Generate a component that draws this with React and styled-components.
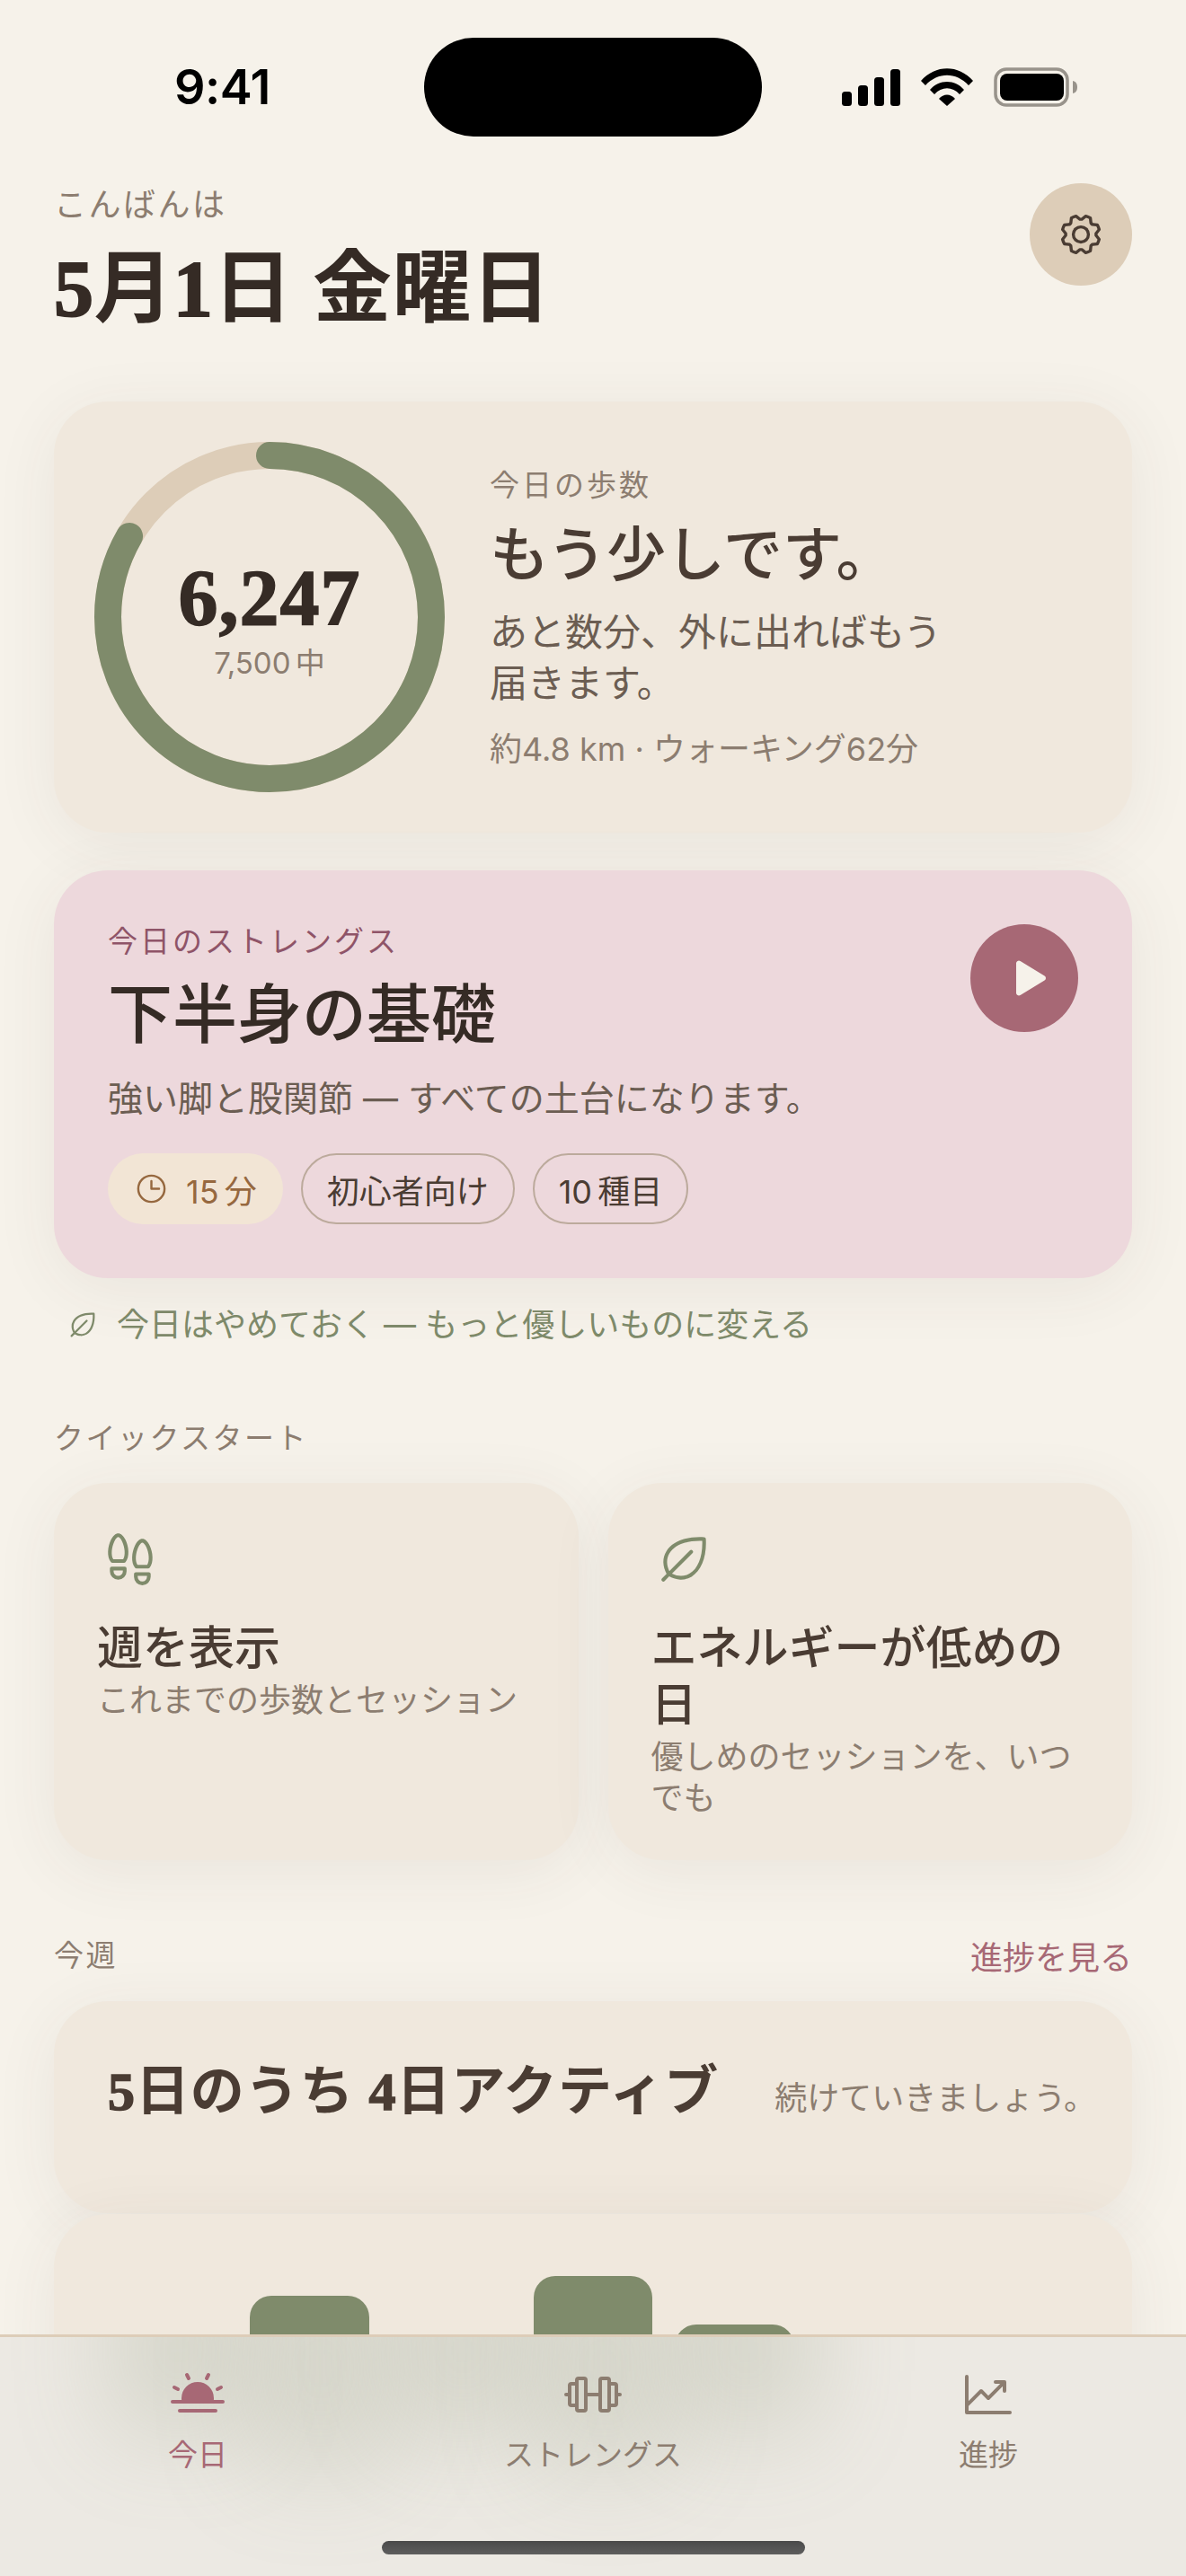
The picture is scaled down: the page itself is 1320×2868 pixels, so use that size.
import React from 'react';
import styled, { createGlobalStyle } from 'styled-components';
import {
  PiGear,
  PiPlayFill,
  PiClock,
  PiLeaf,
  PiFootprints,
  PiSunHorizonFill,
  PiBarbell,
  PiChartLineUp,
} from 'react-icons/pi';

const GlobalStyle = createGlobalStyle`
  html, body {
    margin: 0;
    padding: 0;
    background: #f6f2ea;
  }
  * {
    box-sizing: border-box;
  }
`;

const SANS = `Inter, "Noto Sans CJK JP", sans-serif`;
const DISPLAY = `"Liberation Serif", "Noto Sans CJK JP", serif`;

const Page = styled.div`
  position: relative;
  width: 1320px;
  height: 2868px;
  overflow: hidden;
  background: #f6f2ea;
  font-family: ${SANS};
  color: #352b25;
`;

const StatusBar = styled.div`
  position: relative;
  height: 204px;
`;

const Clock = styled.div`
  position: absolute;
  left: 194px;
  top: 66px;
  font-size: 54px;
  line-height: 62px;
  font-weight: 600;
  letter-spacing: -0.5px;
  color: #000;
`;

const Island = styled.div`
  position: absolute;
  left: 472px;
  top: 42px;
  width: 376px;
  height: 110px;
  border-radius: 55px;
  background: #000;
`;

const StatusIcons = styled.div`
  position: absolute;
  left: 937px;
  top: 75px;
  display: flex;
  align-items: center;
  gap: 23px;
`;

const Header = styled.header`
  display: flex;
  justify-content: space-between;
  align-items: flex-start;
  padding: 0 60px 75px;
`;

const Greeting = styled.div`
  font-size: 36px;
  line-height: 44px;
  letter-spacing: 2.5px;
  padding-top: 2px;
  margin-bottom: -2px;
  color: #8c7d70;
`;

const DateTitle = styled.h1`
  margin: 24px 0 0;
  font-family: ${DISPLAY};
  font-size: 88px;
  line-height: 100px;
  font-weight: 700;
  letter-spacing: 0.4px;
  color: #352b25;
`;

const Numeral = styled.span`
  -webkit-text-stroke: ${(p) => p.$stroke || 2}px currentColor;
`;

const SettingsButton = styled.button`
  width: 114px;
  height: 114px;
  border: 0;
  padding: 0;
  border-radius: 50%;
  background: #ddcdb8;
  color: #4a3c33;
  display: flex;
  align-items: center;
  justify-content: center;
`;

const Main = styled.main`
  padding: 0 60px;
`;

const Card = styled.section`
  background: #f0e8dd;
  border-radius: 60px;
  box-shadow: 0 12px 72px rgba(74, 60, 51, 0.07);
`;

const StepsCard = styled(Card)`
  display: flex;
  align-items: center;
  gap: 50px;
  height: 480px;
  padding: 0 45px;
`;

const RingWrap = styled.div`
  position: relative;
  width: 390px;
  height: 390px;
  flex: none;
`;

const RingCenter = styled.div`
  position: absolute;
  inset: 0;
  padding-top: 6px;
  display: flex;
  flex-direction: column;
  align-items: center;
  justify-content: center;
`;

const StepCount = styled.div`
  font-family: ${DISPLAY};
  font-size: 88px;
  line-height: 92px;
  font-weight: 700;
  color: #352b25;
  letter-spacing: 1px;
  -webkit-text-stroke: 1.5px currentColor;
`;

const StepGoal = styled.div`
  font-size: 33px;
  line-height: 44px;
  margin-top: 4px;
  word-spacing: -4px;
  color: #8c7d70;
`;

const StepsText = styled.div`
  display: flex;
  flex-direction: column;
  margin-top: 3px;
`;

const Eyebrow = styled.div`
  font-size: 33px;
  line-height: 38px;
  letter-spacing: 3px;
  color: ${(p) => p.$color || '#8c7d70'};
`;

const StepsHeading = styled.h2`
  margin: 18px 0 0;
  font-size: 66px;
  line-height: 80px;
  font-weight: 500;
  color: #4a3c33;
`;

const StepsBody = styled.p`
  margin: 18px 0 0;
  max-width: 530px;
  font-size: 42px;
  line-height: 57px;
  color: #6b5d52;
`;

const StepsMeta = styled.div`
  margin-top: 23px;
  font-size: 36px;
  line-height: 44px;
  color: #8c7d70;
`;

const WorkoutCard = styled(Card)`
  position: relative;
  margin-top: 42px;
  padding: 60px;
  background: #edd8dc;
`;

const WorkoutTitle = styled.h2`
  margin: 17px 0 0;
  font-size: 72px;
  line-height: 90px;
  font-weight: 500;
  color: #352b25;
`;

const WorkoutBody = styled.p`
  margin: 21px 0 0;
  font-size: 39px;
  line-height: 56px;
  color: #6b5d52;
`;

const PlayButton = styled.button`
  position: absolute;
  top: 60px;
  right: 60px;
  width: 120px;
  height: 120px;
  border: 0;
  padding: 0 0 0 6px;
  border-radius: 50%;
  background: #a76875;
  color: #f6f2ea;
  display: flex;
  align-items: center;
  justify-content: center;
`;

const Chips = styled.div`
  display: flex;
  gap: 20px;
  margin-top: 33px;
`;

const Chip = styled.span`
  display: inline-flex;
  align-items: center;
  gap: 19px;
  height: 79px;
  padding: 0 27px;
  border-radius: 40px;
  font-size: 36px;
  word-spacing: -4px;
  border: 2px solid ${(p) => (p.$warm ? 'transparent' : '#bcaa9c')};
  background: ${(p) => (p.$warm ? '#f2e5d5' : 'transparent')};
  color: ${(p) => (p.$warm ? '#96683f' : '#4a3c33')};
`;

const SkipLink = styled.a`
  display: flex;
  align-items: center;
  gap: 20px;
  margin-top: 27px;
  padding-left: 14px;
  font-size: 36px;
  line-height: 50px;
  color: #7f8b6b;
`;

const SectionLabel = styled.div`
  font-size: 33px;
  line-height: 40px;
  letter-spacing: 2.5px;
  color: #8c7d70;
`;

const QuickSection = styled(SectionLabel)`
  margin-top: 81px;
`;

const QuickGrid = styled.div`
  display: grid;
  grid-template-columns: 1fr 1fr;
  gap: 33px;
  margin-top: 30px;
`;

const QuickCard = styled(Card)`
  padding: 48px 48px 46px;
  color: #7f8b6b;
`;

const QuickIcon = styled.div`
  height: 60px;
  padding-top: 4px;
  margin-left: ${(p) => p.$shift || 0}px;
`;

const QuickTitle = styled.h3`
  margin: 44px 0 0;
  font-size: 51px;
  line-height: 63px;
  font-weight: 500;
  color: #4a3c33;
`;

const QuickSub = styled.p`
  margin: 4px 0 0;
  font-size: 36px;
  line-height: 46px;
  color: #8c7d70;
`;

const WeekHeader = styled.div`
  display: flex;
  justify-content: space-between;
  align-items: center;
  margin-top: 84px;
  height: 44px;
`;

const WeekLink = styled.a`
  font-size: 36px;
  color: #a76875;
`;

const SummaryCard = styled(Card)`
  display: flex;
  justify-content: space-between;
  align-items: baseline;
  margin-top: 29px;
  padding: 61px 40px 95px 60px;
`;

const SummaryTitle = styled.div`
  font-family: ${DISPLAY};
  font-size: 60px;
  line-height: 80px;
  font-weight: 600;
  letter-spacing: 0.9px;
  color: #4a3c33;
`;

const SummaryNote = styled.div`
  font-size: 36px;
  color: #8c7d70;
`;

const ChartCard = styled(Card)`
  margin-top: 1px;
  padding: 69px 60px 60px;
`;

const Bars = styled.div`
  display: grid;
  grid-template-columns: repeat(7, 1fr);
  gap: 25px;
  align-items: end;
  height: 200px;
`;

const Bar = styled.div`
  border-radius: 24px 24px 0 0;
  background: #7f8b6b;
`;

const TabBar = styled.nav`
  position: absolute;
  left: 0;
  right: 0;
  bottom: 0;
  height: 269px;
  display: grid;
  grid-template-columns: repeat(3, 1fr);
  border-top: 3px solid #ddcdb8;
  background: #ece9e3;
  overflow: hidden;
`;

/* frosted glass: the chart bars showing through the bar, blurred */
const Frost = styled.div`
  position: absolute;
  top: -80px;
  width: 158px;
  background: #7f8b6b;
  opacity: 0.2;
  filter: blur(56px);
`;

const Tab = styled.div`
  position: relative;
  display: flex;
  flex-direction: column;
  align-items: center;
  padding-top: 32px;
  color: ${(p) => (p.$active ? '#a76875' : '#8c7d70')};
`;

const TabLabel = styled.div`
  margin-top: 15px;
  font-size: 33px;
  line-height: 40px;
`;

const HomeIndicator = styled.div`
  position: absolute;
  left: 425px;
  bottom: 24px;
  width: 471px;
  height: 15px;
  border-radius: 8px;
  background: linear-gradient(#4a4a4a, #5e5e5e);
`;

const BAR_HEIGHTS = [70, 178, 60, 200, 146, 30, 30];
const FROST = [
  { left: 120, height: 110 },
  { left: 278, height: 150 },
  { left: 436, height: 110 },
  { left: 593, height: 150 },
  { left: 752, height: 110 },
];
const STEPS = 6247;
const GOAL = 7500;

function StepsRing() {
  const r = 180;
  const circ = 2 * Math.PI * r;
  return (
    <svg width="390" height="390" viewBox="0 0 390 390">
      <circle cx="195" cy="195" r={r} fill="none" stroke="#ddcdb8" strokeWidth="30" />
      <circle
        cx="195"
        cy="195"
        r={r}
        fill="none"
        stroke="#7f8b6b"
        strokeWidth="30"
        strokeLinecap="round"
        strokeDasharray={`${(circ * STEPS) / GOAL} ${circ}`}
        transform="rotate(-90 195 195)"
      />
    </svg>
  );
}

function SignalIcon() {
  return (
    <svg width="65" height="41" viewBox="0 0 65 41" fill="#000">
      <rect x="0" y="25" width="11" height="16" rx="3.5" />
      <rect x="18" y="18" width="11" height="23" rx="3.5" />
      <rect x="36" y="9" width="11" height="32" rx="3.5" />
      <rect x="54" y="0" width="11" height="41" rx="3.5" />
    </svg>
  );
}

function WifiIcon() {
  return (
    <svg width="58" height="42" viewBox="0 0 58 42" fill="#000">
      <path d="M0 14C16-4.500 42-4.500 58 14L53 19C39 4 19 4 5 19Z" />
      <path d="M10 24C20 12 38 12 48 24L43 29C35 20 23 20 15 29Z" />
      <path d="M20 34C25 28 33 28 38 34L29 42Z" />
    </svg>
  );
}

function BatteryIcon() {
  return (
    <svg width="94" height="44" viewBox="0 0 94 44">
      <rect x="2" y="2" width="80" height="40" rx="12" fill="none" stroke="#98938b" strokeWidth="3.500" />
      <rect x="7" y="7" width="71" height="30" rx="8" fill="#000" />
      <path d="M88 15C92 16 93 19 93 22C93 25 92 28 88 29Z" fill="#98938b" />
    </svg>
  );
}

export default function App() {
  return (
    <Page>
      <GlobalStyle />
      <StatusBar>
        <Clock>9:41</Clock>
        <Island />
        <StatusIcons>
          <SignalIcon />
          <WifiIcon />
          <BatteryIcon />
        </StatusIcons>
      </StatusBar>

      <Header>
        <div>
          <Greeting>こんばんは</Greeting>
          <DateTitle>
            <Numeral>5</Numeral>月<Numeral>1</Numeral>日 金曜日
          </DateTitle>
        </div>
        <SettingsButton>
          <PiGear size={54} />
        </SettingsButton>
      </Header>

      <Main>
        <StepsCard>
          <RingWrap>
            <StepsRing />
            <RingCenter>
              <StepCount>6,247</StepCount>
              <StepGoal>7,500 中</StepGoal>
            </RingCenter>
          </RingWrap>
          <StepsText>
            <Eyebrow>今日の歩数</Eyebrow>
            <StepsHeading>もう少しです。</StepsHeading>
            <StepsBody>あと数分、外に出ればもう届きます。</StepsBody>
            <StepsMeta>約4.8 km · ウォーキング62分</StepsMeta>
          </StepsText>
        </StepsCard>

        <WorkoutCard>
          <Eyebrow $color="#8f5468">今日のストレングス</Eyebrow>
          <WorkoutTitle>下半身の基礎</WorkoutTitle>
          <WorkoutBody>強い脚と股関節 — すべての土台になります。</WorkoutBody>
          <PlayButton>
            <PiPlayFill size={48} />
          </PlayButton>
          <Chips>
            <Chip $warm>
              <PiClock size={39} />
              15 分
            </Chip>
            <Chip>初心者向け</Chip>
            <Chip>10 種目</Chip>
          </Chips>
        </WorkoutCard>

        <SkipLink>
          <PiLeaf size={36} />
          今日はやめておく — もっと優しいものに変える
        </SkipLink>

        <QuickSection>クイックスタート</QuickSection>
        <QuickGrid>
          <QuickCard>
            <QuickIcon $shift={4}>
              <PiFootprints size={66} />
            </QuickIcon>
            <QuickTitle>週を表示</QuickTitle>
            <QuickSub>これまでの歩数とセッション</QuickSub>
          </QuickCard>
          <QuickCard>
            <QuickIcon $shift={3}>
              <PiLeaf size={66} />
            </QuickIcon>
            <QuickTitle>エネルギーが低めの日</QuickTitle>
            <QuickSub>優しめのセッションを、いつでも</QuickSub>
          </QuickCard>
        </QuickGrid>

        <WeekHeader>
          <SectionLabel>今週</SectionLabel>
          <WeekLink>進捗を見る</WeekLink>
        </WeekHeader>
        <SummaryCard>
          <SummaryTitle>
            <Numeral $stroke={1.5}>5</Numeral>日のうち <Numeral $stroke={1.5}>4</Numeral>日アクティブ
          </SummaryTitle>
          <SummaryNote>続けていきましょう。</SummaryNote>
        </SummaryCard>
        <ChartCard>
          <Bars>
            {BAR_HEIGHTS.map((h, i) => (
              <Bar key={i} style={{ height: h }} />
            ))}
          </Bars>
        </ChartCard>
      </Main>

      <TabBar>
        {FROST.map((f) => (
          <Frost key={f.left} style={{ left: f.left, height: f.height + 80 }} />
        ))}
        <Tab $active>
          <PiSunHorizonFill size={64} />
          <TabLabel>今日</TabLabel>
        </Tab>
        <Tab>
          <PiBarbell size={64} />
          <TabLabel>ストレングス</TabLabel>
        </Tab>
        <Tab>
          <PiChartLineUp size={64} />
          <TabLabel>進捗</TabLabel>
        </Tab>
        <HomeIndicator />
      </TabBar>
    </Page>
  );
}
